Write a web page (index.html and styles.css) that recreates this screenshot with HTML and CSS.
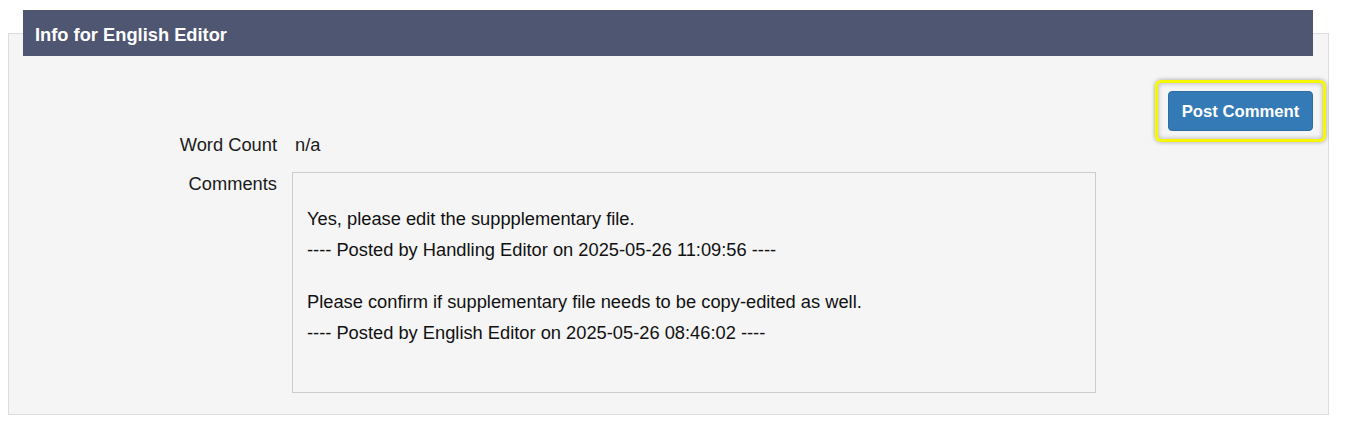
FILE: index.html
```html
<!DOCTYPE html>
<html>
<head>
<meta charset="utf-8">
<link rel="stylesheet" href="styles.css">
</head>
<body>
<div class="panel">
  <div class="panel-heading">Info for English Editor</div>
  <div class="toolbar">
    <button class="btn-post" type="button">Post Comment</button>
  </div>
  <div class="row row-wc">
    <div class="label">Word Count</div>
    <div class="value">n/a</div>
  </div>
  <div class="row row-comments">
    <div class="label label-comments">Comments</div>
    <div class="comments-box">
      <div class="comment">
        <div class="line">Yes, please edit the suppplementary file.</div>
        <div class="line">---- Posted by Handling Editor on 2025-05-26 11:09:56 ----</div>
      </div>
      <div class="comment">
        <div class="line">Please confirm if supplementary file needs to be copy-edited as well.</div>
        <div class="line">---- Posted by English Editor on 2025-05-26 08:46:02 ----</div>
      </div>
    </div>
  </div>
</div>
</body>
</html>
```
FILE: styles.css
```css
html, body {
  margin: 0;
  padding: 0;
  background: #ffffff;
}
body {
  padding: 33px 20px 14px 8px;
  font-family: "Liberation Sans", Arial, sans-serif;
  font-size: 18.3px;
  color: #1a1a1a;
}
.panel {
  background: #f5f5f5;
  border: 1px solid #dddddd;
  padding-bottom: 21px;
}
.panel-heading {
  margin: -24px 15px 0 14px;
  height: 46px;
  background: #4f5672;
  color: #ffffff;
  font-weight: bold;
  font-size: 18.3px;
  display: flex;
  align-items: center;
  padding-left: 12px;
  padding-top: 3px;
  box-sizing: border-box;
}
.toolbar {
  display: flex;
  justify-content: flex-end;
  margin-top: 35px;
  padding-right: 15px;
}
.btn-post {
  position: relative;
  height: 40px;
  width: 145px;
  background: #337ab7;
  border: 1px solid #2e6da4;
  border-radius: 4px;
  color: #ffffff;
  font-family: "Liberation Sans", Arial, sans-serif;
  font-weight: bold;
  font-size: 16.7px;
  padding: 1px 0 0 0;
}
.btn-post::after {
  content: "";
  position: absolute;
  top: -12px;
  bottom: -12px;
  left: -14px;
  right: -14px;
  border: 3px solid #f7f700;
  border-radius: 6px;
  box-shadow: 0 0 4px rgba(0, 0, 0, 0.35), inset 0 0 5px rgba(0, 0, 0, 0.3);
  pointer-events: none;
}
.row {
  display: flex;
  align-items: flex-start;
}
.row-wc {
  margin-top: 4px;
  line-height: 20px;
}
.row-comments {
  margin-top: 17px;
}
.label {
  width: 268px;
  text-align: right;
  flex: none;
  line-height: 20px;
}
.label-comments {
  padding-top: 2px;
}
.value {
  margin-left: 18px;
}
.comments-box {
  margin-left: 15px;
  width: 774px;
  height: 189px;
  border: 1px solid #cccccc;
  padding: 30px 14px 0 14px;
  color: #111111;
}
.comment + .comment {
  margin-top: 21px;
}
.line {
  line-height: 31px;
}
```
